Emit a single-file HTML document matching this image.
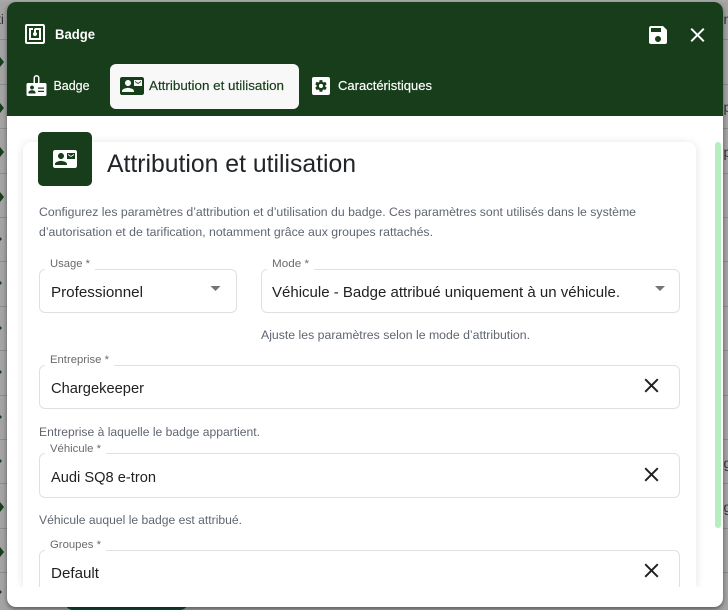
<!DOCTYPE html>
<html lang="fr"><head><meta charset="utf-8"><title>Badge</title>
<style>
html,body{margin:0;padding:0;width:728px;height:610px;overflow:hidden;background:#a3a3a3}
#p{left:0;top:0;width:728px;height:610px;overflow:hidden;background:#a3a3a3}
div{position:absolute;box-sizing:border-box}
svg{position:absolute;left:0;top:0;display:block}
text{font-family:"Liberation Sans",sans-serif}
.ln{left:0;width:728px;height:1px;background:#8c8c8c}
.box{border:1px solid #e0e0e0;border-radius:6px;background:#fff}
.gap{background:#fff;height:3px}
</style></head><body>
<div id="p">
<div style="left:0;top:0;width:728px;height:2px;background:#a8a8a8"></div>
<div class="ln" style="top:39px"></div><div class="ln" style="top:84px"></div><div class="ln" style="top:128px"></div><div class="ln" style="top:173px"></div><div class="ln" style="top:217px"></div><div class="ln" style="top:261px"></div><div class="ln" style="top:306px"></div><div class="ln" style="top:350px"></div><div class="ln" style="top:395px"></div><div class="ln" style="top:439px"></div><div class="ln" style="top:483px"></div><div class="ln" style="top:528px"></div><div class="ln" style="top:572px"></div>
<div style="left:65px;top:600px;width:123px;height:10px;background:#124a33;border-radius:0 0 8px 8px"></div>
<svg width="728" height="610" style="z-index:1">
<g fill="#173d1b"><path d="M0 57l4 5-4 5zM0 103l4 5-4 5zM0 147l4 5-4 5zM0 192l4 5-4 5zM0 237l2 2-2 2zM0 281l2 2-2 2zM0 326l2 2-2 2zM0 370l2 2-2 2zM0 415l2 2-2 2zM0 459l2 2-2 2zM0 502l4 5-4 5zM0 547l4 5-4 5zM0 590l2 2-2 2z"/></g>
<g font-size="14" fill="#333"><text x="-3" y="24">ti</text><text x="723.500" y="24">n</text><text x="723.500" y="112">p</text><text x="723.500" y="157">p</text><text x="723.500" y="468">g</text><text x="723.500" y="512">g</text></g>
</svg>
<div style="left:7px;top:2px;width:716px;height:605px;background:#fff;border-radius:9px;overflow:hidden;z-index:2;box-shadow:0 2px 5px rgba(0,0,0,.45)"></div>
<div style="left:7px;top:2px;width:716px;height:114px;background:#173d1b;border-radius:9px 9px 0 0;z-index:3"></div>
<div style="left:110px;top:64px;width:189px;height:45px;background:#f8f8f8;border-radius:6px;z-index:3"></div>
<div style="left:7px;top:116px;width:716px;height:471px;overflow:hidden;z-index:3">
  <div style="left:16px;top:26px;width:673px;height:445px;background:#fff;border-radius:8px 8px 0 0;box-shadow:0 1px 9px rgba(0,0,0,.12)"></div>
  <div style="left:708px;top:26px;width:6px;height:386px;background:#b5efc0;border-radius:3px"></div>
  <div class="box" style="left:32px;top:153px;width:198px;height:44px"></div>
  <div class="box" style="left:254px;top:153px;width:419px;height:44px"></div>
  <div class="box" style="left:32px;top:249px;width:641px;height:44px"></div>
  <div class="box" style="left:32px;top:337px;width:641px;height:45px"></div>
  <div class="box" style="left:32px;top:434px;width:641px;height:37px;border-bottom:0;border-radius:6px 6px 0 0"></div>
  <div class="gap" style="left:38px;top:152px;width:50px"></div>
  <div class="gap" style="left:260px;top:152px;width:47px"></div>
  <div class="gap" style="left:38px;top:248px;width:69px"></div>
  <div class="gap" style="left:38px;top:336px;width:61px"></div>
  <div class="gap" style="left:38px;top:433px;width:61px"></div>
</div>
<div style="left:38px;top:132px;width:54px;height:54px;background:#173d1b;border-radius:5px;z-index:3"></div>
<svg width="728" height="610" style="z-index:4" viewBox="0 0 728 610">
<defs>
<path id="mail" d="M21 8V7L18 9L15 7V8L18 10L21 8M22 3H2C.9 3 0 3.9 0 5V19C0 20.1 .9 21 2 21H22C23.1 21 24 20.1 24 19V5C24 3.9 23.1 3 22 3M8 6C9.66 6 11 7.34 11 9S9.66 12 8 12 5 10.66 5 9 6.34 6 8 6M14 18H2V17C2 15 6 13.9 8 13.9S14 15 14 17V18M22 12H14V6H22V12Z"/>
<path id="x" d="M19,6.41L17.59,5L12,10.59L6.41,5L5,6.41L10.59,12L5,17.59L6.41,19L12,13.41L17.59,19L19,17.59L13.41,12L19,6.41Z"/>
</defs>
<path transform="translate(23,22)" fill="#fff" d="M18,6H13A2,2 0 0,0 11,8V10.28C10.41,10.62 10,11.26 10,12A2,2 0 0,0 12,14C13.11,14 14,13.1 14,12C14,11.26 13.6,10.62 13,10.28V8H16V16H8V8H10V6H8L6,6V18H18M20,20H4V4H20M20,2H4A2,2 0 0,0 2,4V20A2,2 0 0,0 4,22H20C21.11,22 22,21.1 22,20V4C22,2.89 21.11,2 20,2Z"/>
<path transform="translate(646,23)" fill="#fff" d="M15,9H5V5H15M12,19A3,3 0 0,1 9,16A3,3 0 0,1 12,13A3,3 0 0,1 15,16A3,3 0 0,1 12,19M17,3H5C3.89,3 3,3.9 3,5V19A2,2 0 0,0 5,21H19A2,2 0 0,0 21,19V7L17,3Z"/>
<use href="#x" transform="translate(685.5,23)" fill="#fff"/>
<text x="55" y="39" font-size="14" font-weight="700" fill="#fff" textLength="40" lengthAdjust="spacingAndGlyphs">Badge</text>
<path fill="#fff" fill-rule="evenodd" d="M28 83h5.5v-5a3 3 0 0 1 6 0v5H45a1.5 1.5 0 0 1 1.5 1.5V94.500a1.500 1.500 0 0 1-1.500 1.500H28a1.500 1.500 0 0 1-1.500-1.500V84.500A1.500 1.500 0 0 1 28 83zM35 83h3v-5a1.500 1.500 0 0 0-3 0zM32 85.500a2 2 0 1 0 .01 0zM28.500 93.500h7v-1c0-1.500-2-2.200-3.500-2.200s-3.500.700-3.500 2.200zM38 87.500v1.300h6v-1.300zM38 90.700v1.300h6v-1.300z"/>
<use href="#mail" transform="translate(120,74)" fill="#173d1b"/>
<rect x="312" y="77" width="18" height="18" rx="2" fill="#fff"/>
<path transform="translate(314,79) scale(.58)" fill="#173d1b" d="M12,15.5A3.5,3.5 0 0,1 8.5,12A3.5,3.500 0 0,1 12,8.5A3.5,3.5 0 0,1 15.5,12A3.5,3.5 0 0,1 12,15.5M19.43,12.97C19.47,12.65 19.5,12.33 19.5,12C19.5,11.67 19.47,11.34 19.43,11L21.54,9.37C21.73,9.22 21.78,8.95 21.66,8.73L19.66,5.27C19.54,5.05 19.27,4.96 19.05,5.05L16.56,6.05C16.04,5.66 15.5,5.32 14.87,5.07L14.5,2.42C14.46,2.18 14.25,2 14,2H10C9.75,2 9.54,2.18 9.5,2.42L9.13,5.07C8.5,5.32 7.96,5.66 7.44,6.05L4.95,5.05C4.73,4.96 4.46,5.05 4.34,5.27L2.34,8.73C2.21,8.95 2.27,9.22 2.46,9.37L4.57,11C4.53,11.34 4.5,11.67 4.5,12C4.5,12.33 4.53,12.65 4.57,12.97L2.46,14.63C2.27,14.78 2.21,15.05 2.34,15.27L4.34,18.73C4.46,18.95 4.73,19.03 4.95,18.95L7.44,17.94C7.96,18.34 8.5,18.68 9.13,18.93L9.5,21.58C9.54,21.82 9.75,22 10,22H14C14.25,22 14.46,21.82 14.5,21.58L14.87,18.93C15.5,18.67 16.04,18.34 16.56,17.94L19.05,18.95C19.27,19.03 19.54,18.95 19.66,18.73L21.66,15.27C21.78,15.05 21.73,14.78 21.54,14.63L19.43,12.97Z"/>
<g font-size="12.500">
<text x="53.500" y="90" fill="#fff" textLength="36" lengthAdjust="spacingAndGlyphs" stroke="#fff" stroke-width=".15">Badge</text>
<text x="149" y="90" fill="#173d1b" textLength="135" lengthAdjust="spacingAndGlyphs" stroke="#173d1b" stroke-width=".15">Attribution et utilisation</text>
<text x="338" y="90" fill="#fff" textLength="94" lengthAdjust="spacingAndGlyphs" stroke="#fff" stroke-width=".15">Caractéristiques</text>
</g>
<use href="#mail" transform="translate(53,147)" fill="#fff"/>
<text x="107" y="172" font-size="25" fill="#212529" textLength="249" lengthAdjust="spacingAndGlyphs">Attribution et utilisation</text>
<g font-size="12.300" fill="#5f6670">
<text x="39" y="216" textLength="597" lengthAdjust="spacingAndGlyphs">Configurez les paramètres d’attribution et d’utilisation du badge. Ces paramètres sont utilisés dans le système</text>
<text x="39" y="236" textLength="394" lengthAdjust="spacingAndGlyphs">d’autorisation et de tarification, notamment grâce aux groupes rattachés.</text>
<text x="261" y="339" textLength="269" lengthAdjust="spacingAndGlyphs">Ajuste les paramètres selon le mode d’attribution.</text>
<text x="39" y="436" textLength="221" lengthAdjust="spacingAndGlyphs">Entreprise à laquelle le badge appartient.</text>
<text x="39" y="524" textLength="203" lengthAdjust="spacingAndGlyphs">Véhicule auquel le badge est attribué.</text>
</g>
<g font-size="11" fill="#6b6b6b">
<text x="50" y="267" textLength="40" lengthAdjust="spacingAndGlyphs">Usage *</text>
<text x="272" y="267" textLength="37" lengthAdjust="spacingAndGlyphs">Mode *</text>
<text x="50" y="363" textLength="59" lengthAdjust="spacingAndGlyphs">Entreprise *</text>
<text x="50" y="452" textLength="51" lengthAdjust="spacingAndGlyphs">Véhicule *</text>
<text x="50" y="548" textLength="51" lengthAdjust="spacingAndGlyphs">Groupes *</text>
</g>
<g font-size="15" fill="#212121">
<text x="51" y="297" textLength="92" lengthAdjust="spacingAndGlyphs">Professionnel</text>
<text x="272" y="297" textLength="348" lengthAdjust="spacingAndGlyphs">Véhicule - Badge attribué uniquement à un véhicule.</text>
<text x="51" y="393" textLength="93" lengthAdjust="spacingAndGlyphs">Chargekeeper</text>
<text x="51" y="482" textLength="105" lengthAdjust="spacingAndGlyphs">Audi SQ8 e-tron</text>
<text x="51" y="578" textLength="48" lengthAdjust="spacingAndGlyphs">Default</text>
</g>
<path fill="#757575" d="M210.500 286h10l-5 5zM655 286h10l-5 5z"/>
<g fill="#212121">
<use href="#x" transform="translate(639.500,373.500)"/>
<use href="#x" transform="translate(639.500,462.500)"/>
<use href="#x" transform="translate(639.500,558.500)"/>
</g>
</svg>
</div>
</body></html>
